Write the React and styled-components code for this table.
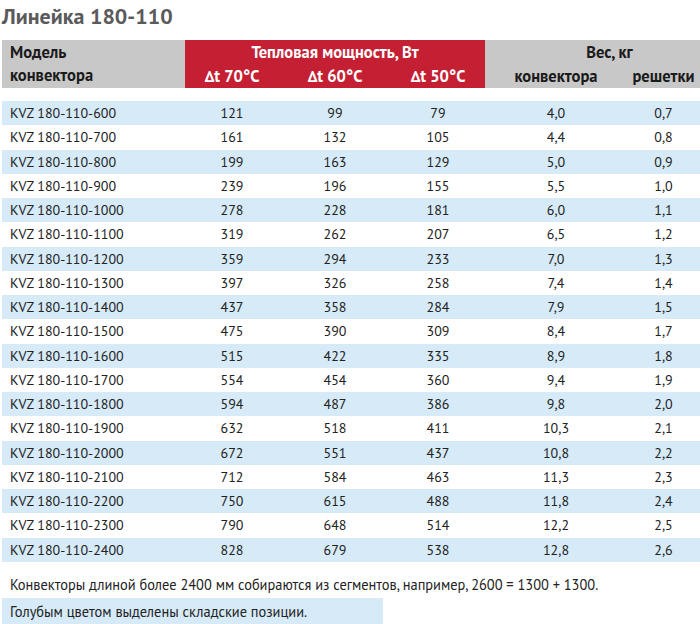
import React from 'react';
import styled, {createGlobalStyle} from 'styled-components';

const GlobalStyle = createGlobalStyle`
body {
  margin: 0;
  background: #fff;
  font-family: "PT Sans", Roboto, "Liberation Sans", sans-serif;
  color: #222;
}
`

const Page = styled.div`
width: 700px;
padding-left: 2px;
box-sizing: border-box;
`

const Title = styled.h2`
margin: 4px 0 0 0;
font-size: 22px;
line-height: 25px;
font-weight: 600;
color: #5a5a5a;
`

const COLS = '183px 94px 112px 94px 142px 73px';

const Head = styled.div`
margin-top: 11px;
display: grid;
grid-template-columns: ${COLS};
grid-template-rows: 24px 24px;
font-weight: 700;
font-size: 16.5px;
color: #1b1b1b;
`

const HeadCell = styled.div`
display: flex;
align-items: center;
justify-content: ${p => p.align || 'center'};
background: ${p => p.red ? '#c41f33' : '#c8c8c8'};
color: ${p => p.red ? '#fff' : '#1b1b1b'};
padding: ${p => p.pad || '0'};
grid-column: ${p => p.col || 'auto'};
grid-row: ${p => p.row || 'auto'};
line-height: 23px;
`

const ModelHead = styled(HeadCell)`
flex-direction: column;
align-items: flex-start;
justify-content: center;
padding-left: 8px;
`

const Body = styled.div`
margin-top: 13px;
`

const Row = styled.div`
display: grid;
grid-template-columns: ${COLS};
height: 24.25px;
align-items: center;
font-size: 14px;
background: ${p => p.blue ? '#d6eaf8' : 'transparent'};
`

const Cell = styled.div`
text-align: center;
`

const ModelCell = styled.div`
padding-left: 8px;
`

const Note = styled.p`
margin: 13px 0 0 8px;
font-size: 14.4px;
line-height: 20px;
color: #222;
`

const Stock = styled.div`
margin-top: 3px;
width: 381px;
height: 30px;
box-sizing: border-box;
padding: 4px 8px;
background: #d6eaf8;
font-size: 14.4px;
line-height: 20px;
color: #222;
`

const rows = [
  [600, 121, 99, 79, '4,0', '0,7'],
  [700, 161, 132, 105, '4,4', '0,8'],
  [800, 199, 163, 129, '5,0', '0,9'],
  [900, 239, 196, 155, '5,5', '1,0'],
  [1000, 278, 228, 181, '6,0', '1,1'],
  [1100, 319, 262, 207, '6,5', '1,2'],
  [1200, 359, 294, 233, '7,0', '1,3'],
  [1300, 397, 326, 258, '7,4', '1,4'],
  [1400, 437, 358, 284, '7,9', '1,5'],
  [1500, 475, 390, 309, '8,4', '1,7'],
  [1600, 515, 422, 335, '8,9', '1,8'],
  [1700, 554, 454, 360, '9,4', '1,9'],
  [1800, 594, 487, 386, '9,8', '2,0'],
  [1900, 632, 518, 411, '10,3', '2,1'],
  [2000, 672, 551, 437, '10,8', '2,2'],
  [2100, 712, 584, 463, '11,3', '2,3'],
  [2200, 750, 615, 488, '11,8', '2,4'],
  [2300, 790, 648, 514, '12,2', '2,5'],
  [2400, 828, 679, 538, '12,8', '2,6'],
]

function App() {
  return (
    <Page>
      <GlobalStyle />
      <Title>Линейка 180-110</Title>
      <Head>
        <ModelHead col="1" row="1 / 3">
          <span>Модель</span>
          <span>конвектора</span>
        </ModelHead>
        <HeadCell red col="2 / 5" row="1">Тепловая мощность, Вт</HeadCell>
        <HeadCell red col="2" row="2">Δt 70°C</HeadCell>
        <HeadCell red col="3" row="2">Δt 60°C</HeadCell>
        <HeadCell red col="4" row="2">Δt 50°C</HeadCell>
        <HeadCell col="5 / 7" row="1" pad="0 0 0 34px">Вес, кг</HeadCell>
        <HeadCell col="5" row="2">конвектора</HeadCell>
        <HeadCell col="6" row="2">решетки</HeadCell>
      </Head>
      <Body>
        {rows.map((r, i) => (
          <Row key={r[0]} blue={i % 2 === 0}>
            <ModelCell>KVZ 180-110-{r[0]}</ModelCell>
            <Cell>{r[1]}</Cell>
            <Cell>{r[2]}</Cell>
            <Cell>{r[3]}</Cell>
            <Cell>{r[4]}</Cell>
            <Cell>{r[5]}</Cell>
          </Row>
        ))}
      </Body>
      <Note>Конвекторы длиной более 2400 мм собираются из сегментов, например, 2600 = 1300 + 1300.</Note>
      <Stock>Голубым цветом выделены складские позиции.</Stock>
    </Page>
  )
}

export default App
